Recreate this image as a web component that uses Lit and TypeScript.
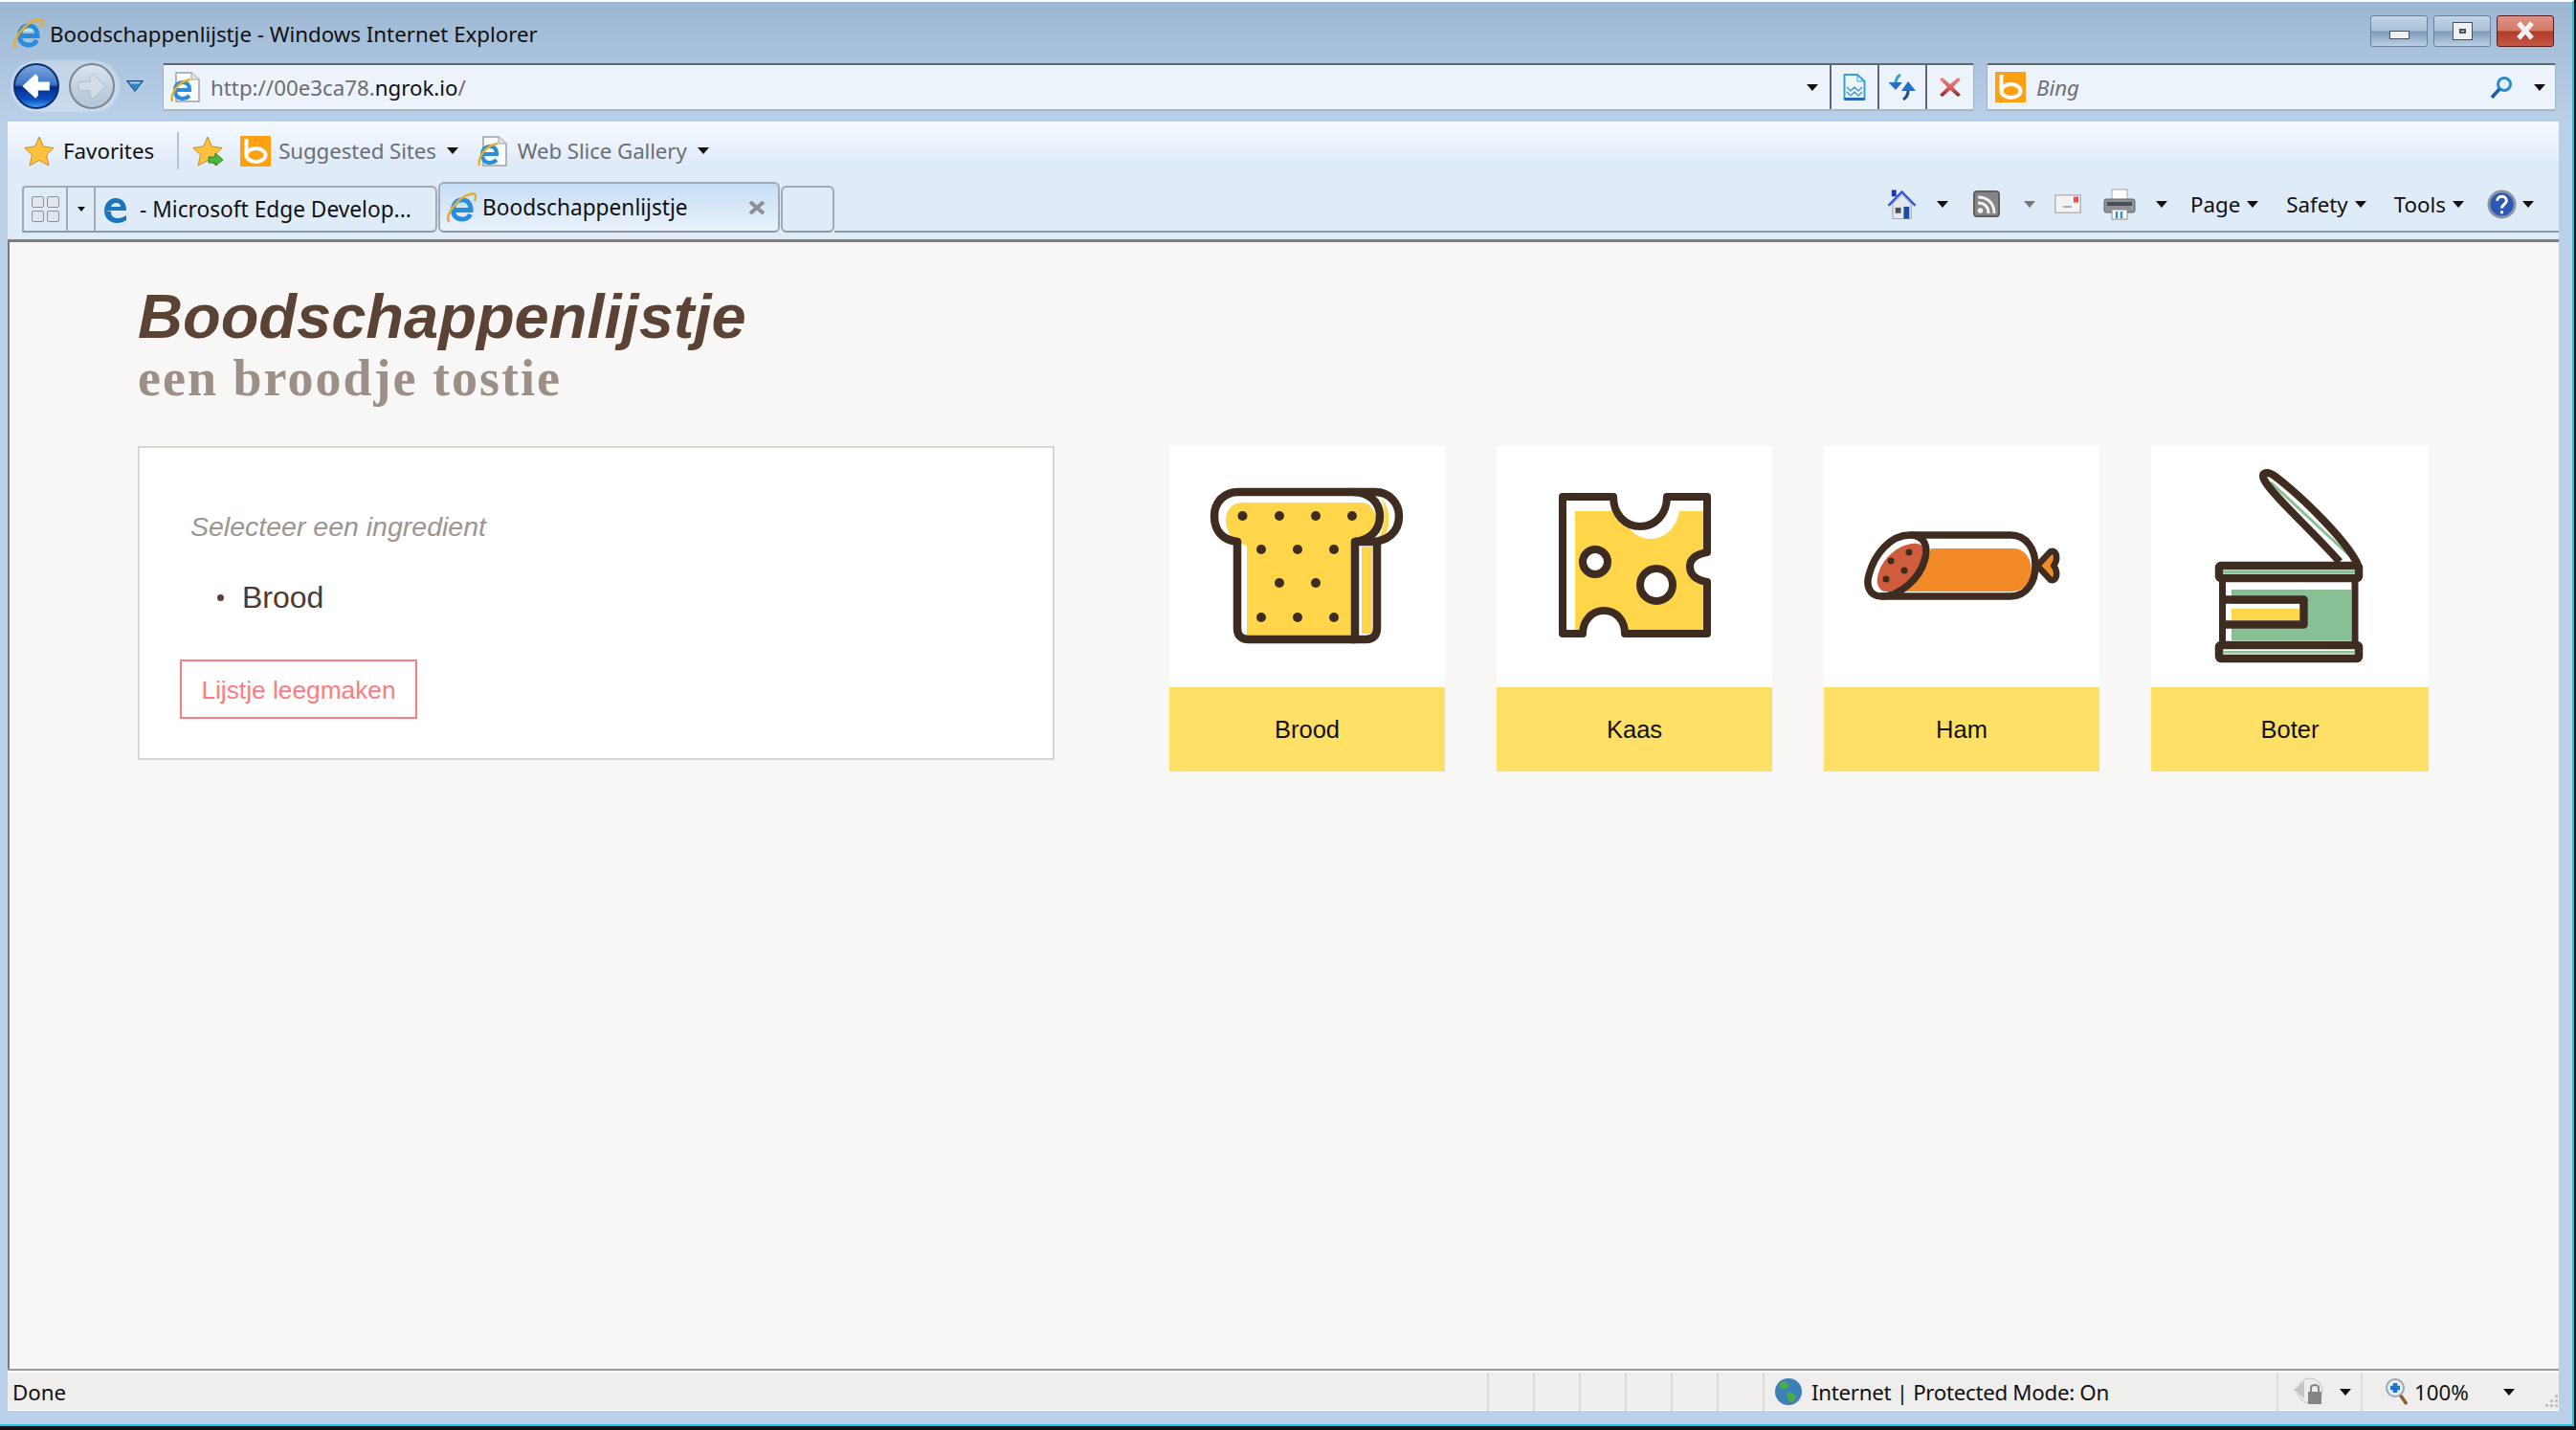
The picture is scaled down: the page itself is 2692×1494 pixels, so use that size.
import { LitElement, css, html, svg, type TemplateResult } from "lit";
import { customElement } from "lit/decorators.js";

const INK = "#3f2c20";
const YELLOW = "#ffd54a";
const GREEN = "#88bf95";

const ieGlyph = svg`
  <path d="M8 18.500 H26 C26 11 22 8 17 8 C11 8 7.500 12 7.500 18.500 C7.500 25 12 28 17 28 C21 28 24 26 25.500 23" fill="none" stroke="#2a8ddb" stroke-width="5" />
  <path d="M11 14 C12 11 14 10.500 17 10.500 C20 10.500 22 11.500 22.500 14 Z" fill="#bfe4fa" />
  <path d="M3 31 C-1 23 13 4 27 1.500 C32 0.500 32 5 30 9" fill="none" stroke="#e8ad2e" stroke-width="2.600" />
`;

const ieIcon = (): TemplateResult => html`<svg class="ie" viewBox="0 0 32 32">${ieGlyph}</svg>`;

const docIcon = (): TemplateResult => html`<svg class="ie" viewBox="0 0 32 32">
  <path d="M6 1 H22 L30 8 V31 H6 Z" fill="#fbfbfc" stroke="#9da1a6" stroke-width="1.500" />
  <path d="M22 1 V8 H30" fill="#e3e5e8" stroke="#9da1a6" />
  <path d="M5 19 H20 C20 13 17 11 13 11 C8 11 5 14 5 19 C5 25 8 28 13 28 C16 28 18 27 20 25" fill="none" stroke="#2a8ddb" stroke-width="4" />
  <path d="M2 31 C0 23 8 10 21 8" fill="none" stroke="#e8ad2e" stroke-width="2.400" />
</svg>`;

const bingIcon = (): TemplateResult => html`<svg class="bing" viewBox="0 0 32 32">
  <rect width="32" height="32" fill="#ffa012" />
  <path d="M6.500 3 V20" stroke="#fff" stroke-width="4" />
  <ellipse cx="16.500" cy="20" rx="10" ry="7" fill="none" stroke="#fff" stroke-width="4" />
</svg>`;

const starIcon = (extra = false): TemplateResult => html`<svg class="star" viewBox="0 0 32 32">
  <path d="M16 1 L20.500 11 L31 12.500 L23.500 20 L26 31 L16 25.500 L6 31 L8.500 20 L1 12.500 L11.500 11 Z" fill="#fbc13f" stroke="#c98a22" />
  ${extra ? svg`<path d="M17 22 H24 V18 L32 25 L24 31 V28 H17 Z" fill="#49b83c" stroke="#2c8a24" />` : ""}
</svg>`;

const breadIcon = svg`
  <path d="M81 104 C66 100 59 90 59 78 C59 66 66 59 78 59 H200 C212 59 216 70 216 78 C216 90 205 98 190 98 V198 H81 Z" fill="${YELLOW}" />
  <path d="M222 55 C231 65 233 86 222 97 L218 97 C226 85 226 68 222 55 Z" fill="${YELLOW}" />
  <rect x="201" y="105" width="11" height="91" fill="${YELLOW}" />
  <path d="M71 100 C55 98 47 88 47 73 C47 58 58 48 72 48 H192 C208 48 220 58 220 73 C220 88 210 98 194 100 V202 H83 Q71 202 71 190 Z" fill="none" stroke="${INK}" stroke-width="8.500" stroke-linejoin="round" />
  <path d="M192 48 H215 C230 48 240 60 240 73 C240 90 228 100 210 100 H194 M217 100 V190 Q217 202 205 202 H190" fill="none" stroke="${INK}" stroke-width="8.500" />
  ${[[76.500, 73], [115, 73], [153, 73], [191, 73], [96, 108], [134, 108], [172, 108], [115, 143], [153, 143], [96, 179], [134, 179], [172, 179]].map(
    ([x, y]) => svg`<circle cx="${x}" cy="${y}" r="5" fill="${INK}" />`,
  )}
`;

const cheeseIcon = svg`
  <path d="M82 68 H131 C135 88 148 97 161 97 C176 97 188 85 191 68 H217 V111 C208 113 202 118 202 126 C202 134 208 140 217 142 V192 H134 C134 182 125 172 112 172 C100 172 90 182 87 192 H82 Z" fill="${YELLOW}" />
  <path d="M69 53 H122 C122 72 135 84 150 84 C165 84 178 72 178 53 H220 V111 C208 113 202 118 202 126 C202 134 208 140 220 142 V196 H134 C134 182 125 172 112 172 C100 172 90 182 90 196 H69 Z" fill="none" stroke="${INK}" stroke-width="8" stroke-linejoin="round" />
  <circle cx="103" cy="121" r="13" fill="#fff" stroke="${INK}" stroke-width="8" />
  <circle cx="167" cy="145" r="17" fill="#fff" stroke="${INK}" stroke-width="8" />
`;

const hamIcon = svg`
  <path d="M112 107 H198 C210 107 217 118 217 130 C217 142 210 152 195 152 H82 C95 145 105 130 112 107 Z" fill="#f28a27" />
  <path d="M92 102 C105 100 108 110 103 122 C96 140 78 153 64 152 C55 150 54 140 58 130 C64 115 78 104 92 102 Z" fill="#d05c3e" />
  <path d="M90 93 H195 C212 93 221 108 221 125 C221 142 212 157 195 157 H60 C47 157 44 145 47 135 C53 112 70 93 90 93 Z" fill="none" stroke="${INK}" stroke-width="7.500" />
  <path d="M90 93 C105 93 110 105 105 120 C100 138 80 157 60 157" fill="none" stroke="${INK}" stroke-width="7.500" />
  ${[[89, 111], [70, 120], [84, 130], [65, 139]].map(([x, y]) => svg`<circle cx="${x}" cy="${y}" r="3.500" fill="${INK}" />`)}
  <path d="M223 125 L237 110 C244 108 245 119 240 125 C245 131 244 142 237 140 Z" fill="#f28a27" stroke="${INK}" stroke-width="6.500" stroke-linejoin="round" />
`;

const canIcon = svg`
  <rect x="84" y="150" width="125" height="53" fill="${GREEN}" />
  <rect x="76" y="165" width="80" height="18" fill="#fff" />
  <rect x="84" y="170" width="71" height="12" fill="${YELLOW}" />
  <path d="M125 38 L208 115" stroke="${GREEN}" stroke-width="3" />
  <path d="M197 121 C170 90 125 50 118 35 C114 27 122 26 130 32 C160 55 205 100 216 124" fill="none" stroke="${INK}" stroke-width="8" />
  <rect x="71" y="125" width="146" height="13" rx="2" fill="#fff" stroke="${INK}" stroke-width="8.500" />
  <rect x="75" y="130" width="138" height="3" fill="${GREEN}" />
  <path d="M74.500 138 V208 M213 138 V208" stroke="${INK}" stroke-width="7" />
  <path d="M75 160.500 H159.500 V186.500 H75" fill="none" stroke="${INK}" stroke-width="8.500" stroke-linejoin="round" />
  <rect x="71" y="208" width="146" height="14" rx="2" fill="#fff" stroke="${INK}" stroke-width="8.500" />
  <rect x="75" y="214" width="138" height="2.500" fill="${GREEN}" />
`;

const cards = [
  { name: "Brood", icon: breadIcon },
  { name: "Kaas", icon: cheeseIcon },
  { name: "Ham", icon: hamIcon },
  { name: "Boter", icon: canIcon },
];

@customElement("app-root")
export class AppRoot extends LitElement {
  render(): TemplateResult {
    return html`<div class="window">
      <div class="titlebar">
        ${ieIcon()}
        <span class="title">Boodschappenlijstje - Windows Internet Explorer</span>
        <div class="controls">
          <div class="ctl"><i class="min"></i></div>
          <div class="ctl"><i class="max"></i></div>
          <div class="ctl close">
            <svg viewBox="0 0 20 20" width="22" height="20"><path d="M3 2 L17 18 M17 2 L3 18" stroke="#f2f2f2" stroke-width="5" /></svg>
          </div>
        </div>
      </div>

      <div class="navrow">
        <div class="navbtns">
          <div class="round back">
            <svg viewBox="0 0 48 48" width="44" height="44"><path d="M8 24 L23 10 L26 13 V19 H39 V29 H26 V35 L23 38 Z" fill="#fff" /></svg>
          </div>
          <div class="round fwd">
            <svg viewBox="0 0 48 48" width="44" height="44"><path d="M40 24 L25 10 L22 13 V19 H9 V29 H22 V35 L25 38 Z" fill="#d3dde8" stroke="#aebccb" /></svg>
          </div>
          <svg class="nav-drop" viewBox="0 0 18 12" width="18" height="12">
            <path d="M0.500 0.500 H17.500 L9 11.500 Z" fill="#2f86c9" stroke="#1c4a78" />
            <path d="M3 1.500 H15 L13.500 3.500 H4.500 Z" fill="#9ccbec" />
          </svg>
        </div>
        <div class="address">
          ${docIcon()}
          <span class="url">http://00e3ca78.<b>ngrok.io</b>/</span>
          <i class="arrow url-arrow"></i>
          <div class="addr-btn">
            <svg viewBox="0 0 24 28" width="24" height="28">
              <path d="M1.500 1 H15 L22.500 8 V26.500 H1.500 Z" fill="#eef6fc" stroke="#36a3d8" stroke-width="2" />
              <path d="M1.500 26.500 H22.500" stroke="#2468b4" stroke-width="3" />
              <path d="M15 1 V8 H22.500" fill="none" stroke="#36a3d8" />
              <path d="M4 14 L8 18 L12 14 L16 18 L20 14 M4 19 L8 23 L12 19 L16 23 L20 19" fill="none" stroke="#4a9bd6" stroke-width="1.500" />
            </svg>
          </div>
          <div class="addr-btn">
            <svg viewBox="0 0 30 28" width="30" height="28">
              <path d="M13 1 C10 3 8 6 8 10" fill="none" stroke="#35a0d8" stroke-width="3" />
              <path d="M0.500 9 H15 L8 17 Z" fill="#2b6fc0" />
              <path d="M21 18 C21 22 19 25 16 27" fill="none" stroke="#1d4c8a" stroke-width="3" />
              <path d="M14 18 H29 L21 8 Z" fill="#2b6fc0" />
            </svg>
          </div>
          <div class="addr-btn">
            <svg viewBox="0 0 22 20" width="22" height="20">
              <defs>
                <linearGradient id="stop" x1="0" y1="0" x2="0" y2="1">
                  <stop offset="0" stop-color="#ec8585" />
                  <stop offset="0.55" stop-color="#d95f5f" />
                  <stop offset="1" stop-color="#8a1f24" />
                </linearGradient>
              </defs>
              <path d="M0 2 L3 0 L11 7 L19 0 L22 2 L14 10 L22 18 L19 20 L11 13 L3 20 L0 18 L8 10 Z" fill="url(#stop)" />
            </svg>
          </div>
        </div>
        <div class="search">
          ${bingIcon()}
          <span class="bing-text">Bing</span>
          <svg class="lens" viewBox="0 0 24 24" width="24" height="24">
            <circle cx="15" cy="9" r="6.500" fill="#e6f2fb" stroke="#2a8ad0" stroke-width="3" />
            <path d="M10 14 L2 23" stroke="#1d5ea8" stroke-width="3.500" />
          </svg>
          <i class="arrow search-arrow"></i>
        </div>
      </div>

      <div class="chrome">
        <div class="favbar">
          ${starIcon()}
          <span class="fav-label">Favorites</span>
          <i class="fav-sep"></i>
          ${starIcon(true)}
          ${bingIcon()}
          <span class="link">Suggested Sites</span>
          <i class="arrow"></i>
          ${docIcon()}
          <span class="link">Web Slice Gallery</span>
          <i class="arrow"></i>
        </div>

        <div class="tabrow">
          <div class="quick">
            <div class="grid-ico"><i></i><i></i><i></i><i></i></div>
          </div>
          <div class="quick drop"><i class="arrow mini"></i></div>
          <div class="tab">
            <svg class="edge" viewBox="0 0 32 32">
              <path d="M4 17 H26 C26 9 22 4 15 4 C8 4 3 10 3 17 C3 25 9 30 16 30 C20 30 23 29 26 27 V22 C23 24 20 25 17 25 C13 25 10 23 10 18 M10 13 C11 10 13 9 15 9 C18 9 20 10 20 13 Z" fill="#1c74bd" />
            </svg>
            <span>- Microsoft Edge Develop...</span>
          </div>
          <div class="tab active">
            ${ieIcon()}
            <span>Boodschappenlijstje</span>
            <svg class="tab-x" viewBox="0 0 18 14" width="18" height="14"><path d="M2 1 L16 13 M16 1 L2 13" stroke="#8c9095" stroke-width="4" /></svg>
          </div>
          <div class="tab newtab"></div>

          <div class="tools">
            <svg viewBox="0 0 32 33" width="31" height="33">
              <rect x="5" y="1" width="5" height="7" fill="#1f35ad" />
              <path d="M6 16 L16 6 L26 16 V32 H6 Z" fill="#e3e7ec" stroke="#9aa3af" />
              <path d="M1.500 18 L16 3 L30.500 18" fill="none" stroke="#3a55c8" stroke-width="2.500" />
              <rect x="18" y="19" width="6" height="13" fill="#1d4c9c" />
              <rect x="9" y="20" width="6" height="6" fill="#4a4f57" />
            </svg>
            <i class="arrow a-home"></i>
            <svg viewBox="0 0 28 28" width="28" height="28">
              <rect x="1" y="1" width="26" height="26" rx="3" fill="#858585" stroke="#606060" stroke-width="2" />
              <circle cx="7.500" cy="21" r="2.800" fill="#f2f2f2" />
              <path d="M5 13 C12 13 16 17 16 24 M5 7 C16 7 22 14 22 24" fill="none" stroke="#f2f2f2" stroke-width="3" />
            </svg>
            <i class="arrow gray a-rss"></i>
            <svg viewBox="0 0 28 20" width="28" height="20">
              <rect x="0.750" y="0.750" width="26.500" height="18.500" fill="#f3f3f3" stroke="#b5b5b5" stroke-width="1.500" />
              <rect x="20" y="2.500" width="5" height="6" fill="#ee4a4a" />
              <path d="M9 13 H18" stroke="#9a9a9a" stroke-width="1.500" />
            </svg>
            <svg class="t-print" viewBox="0 0 34 33" width="34" height="33">
              <rect x="9" y="1" width="16" height="12" fill="#fff" stroke="#a5a5a5" />
              <rect x="1" y="11" width="32" height="14" rx="2" fill="#8c9097" stroke="#62666c" />
              <rect x="4" y="14" width="26" height="4" fill="#4a4e54" />
              <rect x="29" y="19" width="2" height="2" fill="#63d05a" />
              <rect x="9" y="22" width="16" height="10" fill="#fff" stroke="#8a8a8a" />
              <path d="M14 24 V31 M19 24 V31" stroke="#2f8fc9" stroke-width="2.500" />
            </svg>
            <i class="arrow a-print"></i>
            <span class="menu">Page</span><i class="arrow a-menu"></i>
            <span class="menu">Safety</span><i class="arrow a-menu"></i>
            <span class="menu">Tools</span><i class="arrow a-menu"></i>
            <svg class="t-help" viewBox="0 0 32 32" width="31" height="31">
              <circle cx="16" cy="16" r="14" fill="#2d57b4" stroke="#8b93a6" stroke-width="3" />
              <path d="M11 12 C11 6 21 6 21 12 C21 16 16 16 16 20 M16 23 V26" fill="none" stroke="#fff" stroke-width="3" />
            </svg>
            <i class="arrow a-help"></i>
          </div>
        </div>

        <main class="page">
          <h1>Boodschappenlijstje</h1>
          <h2>een broodje tostie</h2>
          <div class="columns">
            <section class="panel">
              <p class="hint">Selecteer een ingredient</p>
              <ul><li>Brood</li></ul>
              <button>Lijstje leegmaken</button>
            </section>
            <div class="cards">
              ${cards.map(
                (c) => html`<div class="card">
                  <svg class="art" viewBox="0 0 288 252" width="288" height="252">${c.icon}</svg>
                  <div class="label">${c.name}</div>
                </div>`,
              )}
            </div>
          </div>
        </main>

        <footer class="status">
          <span class="done">Done</span>
          <div class="cells"><i></i><i></i><i></i><i></i><i></i><i></i><i></i></div>
          <svg class="globe" viewBox="0 0 30 30" width="30" height="30">
            <circle cx="15" cy="15" r="14" fill="#3d7fb8" />
            <path d="M7 5 C12 3 16 6 15 10 C12 13 8 12 5 11 Z M13 16 C18 14 24 17 22 23 C19 28 15 26 14 22 Z" fill="#4bab4a" />
          </svg>
          <span class="zone">Internet | Protected Mode: On</span>
          <div class="cell-end">
            <svg viewBox="0 0 34 30" width="34" height="30">
              <circle cx="18" cy="14" r="13" fill="#ececec" stroke="#c4c4c4" />
              <path d="M1 13 L12 4 V22 Z" fill="#c6c6c6" />
              <rect x="16" y="15" width="14" height="13" fill="#858585" />
              <path d="M19 15 V11 C19 7 27 7 27 11 V15" fill="none" stroke="#858585" stroke-width="2" />
            </svg>
            <i class="arrow a-lock"></i>
          </div>
          <div class="zoom">
            <svg viewBox="0 0 24 28" width="24" height="28">
              <path d="M15 17 L22 27" stroke="#8a5a30" stroke-width="3.500" />
              <circle cx="10" cy="10" r="9" fill="#e8eef5" stroke="#9aa6b3" stroke-width="2" />
              <path d="M5 10 H15 M10 5 V15" stroke="#1d75c9" stroke-width="4.500" />
            </svg>
            <span>100%</span>
            <i class="arrow a-zoom"></i>
          </div>
          <svg class="grip" viewBox="0 0 16 16" width="16" height="16">
            ${[[13, 2], [8, 7], [13, 7], [3, 12], [8, 12], [13, 12]].map(
              ([x, y]) => svg`<rect x="${x}" y="${y}" width="3" height="3" fill="#c3c1bf" />`,
            )}
          </svg>
        </footer>
      </div>
    </div>`;
  }

  static styles = css`
    :host {
      display: block;
      width: 2692px;
      height: 1494px;
      overflow: hidden;
      background: #101418;
    }

    * {
      box-sizing: border-box;
    }

    svg {
      flex: none;
    }

    .window {
      width: 2690px;
      height: 1490px;
      display: flex;
      flex-direction: column;
      border-top: 2px solid #fff;
      border-bottom: 2px solid #1fbfe0;
      border-right: 2px solid #1fbfe0;
      background: linear-gradient(#9db7d3 0, #b9d0e8 125px);
      font-family: "Noto Sans", sans-serif;
      font-size: 22.300px;
      color: #111;
      white-space: nowrap;
    }

    .arrow {
      display: block;
      flex: none;
      width: 0;
      height: 0;
      border-left: 6.500px solid transparent;
      border-right: 6.500px solid transparent;
      border-top: 7px solid #111;
    }

    .arrow.gray {
      border-top-color: #777;
    }

    .arrow.mini {
      border-left-width: 4px;
      border-right-width: 4px;
      border-top-width: 5px;
    }

    .ie,
    .bing,
    .star {
      width: 32px;
      height: 32px;
    }

    /* title bar */
    .titlebar {
      flex: none;
      height: 60px;
      display: flex;
      align-items: center;
      padding: 6px 0 0 13px;
    }

    .title {
      margin-left: 7px;
    }

    .controls {
      margin-left: auto;
      margin-right: 19px;
      display: flex;
      gap: 6px;
      margin-top: -6px;
    }

    .ctl {
      width: 60px;
      height: 33px;
      border: 1px solid #6f8299;
      border-radius: 3px;
      display: flex;
      align-items: center;
      justify-content: center;
      background: linear-gradient(#c2d4e8 0, #a9c0da 48%, #7f9ab9 52%, #bcd0e6 100%);
    }

    .ctl.close {
      border-color: #5a1a1e;
      background: linear-gradient(#dd9184 0, #d3796a 48%, #b03a28 52%, #c65a44 100%);
    }

    .min {
      width: 21px;
      height: 9px;
      margin-top: 8px;
      background: #f0f0f0;
      border: 1px solid #47525e;
    }

    .max {
      width: 21px;
      height: 19px;
      display: block;
      background: #f0f0f0;
      border: 1px solid #47525e;
      box-shadow: inset 0 0 0 6px #f0f0f0, inset 0 0 0 8px #47525e;
    }

    /* back, forward, address, search */
    .navrow {
      flex: none;
      height: 65px;
      display: flex;
      align-items: flex-start;
      padding: 4px 0 0 12px;
    }

    .navbtns {
      position: relative;
      width: 158px;
      height: 56px;
      margin-top: -4px;
      display: flex;
      align-items: center;
      gap: 10px;
      padding-left: 2px;
    }

    .navbtns::before {
      content: "";
      position: absolute;
      left: 0;
      top: 2px;
      width: 112px;
      height: 52px;
      border-radius: 26px;
      background: rgba(255, 255, 255, 0.28);
      box-shadow: 0 0 3px rgba(255, 255, 255, 0.6);
    }

    .round {
      position: relative;
      width: 48px;
      height: 48px;
      border-radius: 50%;
    }

    .back {
      background: linear-gradient(#7ba6de 0, #3f74c6 46%, #062a88 52%, #0c50c0 82%, #3e9ef2 100%);
      border: 2px solid #0c2f72;
    }

    .fwd {
      background: linear-gradient(#dbe5f0 0, #c3d1e0 50%, #b4c5d7 100%);
      border: 2px solid #7c8592;
    }

    .nav-drop {
      position: relative;
      margin-left: 2px;
    }

    .address,
    .search {
      height: 50px;
      display: flex;
      align-items: center;
      background: #ecf3fb;
      border: 1px solid #9eb1c6;
      border-top: 2px solid #5b6570;
      border-bottom: 2px solid #a9b6c4;
      border-radius: 2px;
    }

    .address {
      width: 1893px;
      padding-left: 7px;
    }

    .url {
      margin-left: 10px;
      color: #6d6d6d;
    }

    .url b {
      font-weight: 400;
      color: #111;
    }

    .url-arrow {
      margin-left: auto;
      margin-right: 12px;
    }

    .addr-btn {
      flex: none;
      width: 50px;
      height: 100%;
      display: flex;
      align-items: center;
      justify-content: center;
      border-left: 2px solid #5d6873;
    }

    .search {
      width: 595px;
      margin-left: 13px;
      padding-left: 8px;
    }

    .bing-text {
      margin-left: 11px;
      color: #6f6f75;
      font-style: italic;
    }

    .lens {
      margin-left: auto;
    }

    .search-arrow {
      margin: 0 10px 0 22px;
    }

    /* everything inside the frame */
    .chrome {
      flex: 1;
      min-height: 0;
      margin: 0 14px 14px 8px;
      display: flex;
      flex-direction: column;
    }

    .favbar {
      flex: none;
      height: 64px;
      display: flex;
      align-items: center;
      padding: 0 0 3px 17px;
      background: linear-gradient(#f6faff 0, #e0ebf8 44px);
    }

    .fav-label {
      margin-left: 9px;
    }

    .fav-sep {
      width: 2px;
      height: 39px;
      margin: 0 14px 0 24px;
      background: #b9c3ce;
    }

    .favbar .bing {
      margin: 0 8px 0 18px;
    }

    .link {
      color: #6c6f73;
      letter-spacing: -0.1px;
    }

    .favbar .arrow {
      margin: 0 20px 0 11px;
    }

    .favbar .ie {
      margin-right: 10px;
    }

    .tabrow {
      flex: none;
      height: 62px;
      display: flex;
      align-items: flex-end;
      padding: 0 0 7px 15px;
      background: #e0ebf8;
      border-bottom: 3px solid #7e7e7e;
    }

    .quick {
      height: 49px;
      width: 46px;
      display: flex;
      align-items: center;
      justify-content: center;
      border: 2px solid #a3a9b1;
      border-right: 0;
      border-bottom: 2px solid #8f97a3;
      border-radius: 4px 0 0 0;
    }

    .quick.drop {
      width: 31px;
      border-radius: 0;
      border-right: 2px solid #a3a9b1;
    }

    .grid-ico {
      display: grid;
      grid-template-columns: 13px 13px;
      gap: 3px;
    }

    .grid-ico i {
      height: 12px;
      background: #e2e6ec;
      border: 1px solid #8a919a;
      border-radius: 2px;
    }

    .tab {
      flex: none;
      height: 49px;
      width: 357px;
      display: flex;
      align-items: center;
      padding-left: 6px;
      gap: 8px;
      font-size: 22.700px;
      border: 2px solid #a3a9b1;
      border-left: 0;
      border-bottom-color: #8f97a3;
      border-radius: 0 6px 6px 0;
    }

    .tab.active {
      height: 53px;
      margin-left: 1px;
      gap: 6px;
      border-left: 2px solid #a3a9b1;
      border-radius: 6px;
      background: linear-gradient(#c6ddf6 0, #eaf2fb 100%);
    }

    .tab-x {
      margin-left: auto;
      margin-right: 13px;
    }

    .newtab {
      width: 56px;
      margin-left: 1px;
      border-left: 2px solid #a3a9b1;
      border-radius: 6px;
    }

    .edge {
      width: 32px;
      height: 32px;
    }

    .tools {
      flex: 1;
      align-self: stretch;
      display: flex;
      align-items: center;
      justify-content: flex-end;
      padding: 0 26px 6px 0;
      border-bottom: 2px solid #8f97a3;
    }

    .a-home {
      margin: 0 26px 0 21px;
    }

    .a-rss {
      margin: 0 20px 0 25px;
    }

    .t-print {
      margin-left: 23px;
    }

    .a-print {
      margin: 0 24px 0 21px;
    }

    .a-menu {
      margin: 0 29px 0 7px;
    }

    .t-help {
      margin-left: -5px;
    }

    .a-help {
      margin-left: 6px;
    }

    /* the page itself */
    .page {
      flex: 1;
      min-height: 0;
      padding: 43px 0 0 134px;
      background: #f8f7f5;
      border-left: 2px solid #77797c;
      font-family: "Liberation Sans", Arial, sans-serif;
    }

    h1 {
      margin: 0;
      font-size: 65px;
      line-height: 70px;
      font-style: italic;
      font-weight: 700;
      color: #5a4334;
    }

    h2 {
      margin: 1px 0 43px;
      font-family: "Liberation Serif", serif;
      font-size: 54px;
      line-height: 56px;
      font-weight: 700;
      letter-spacing: 2px;
      color: #9c8f87;
    }

    .columns {
      display: flex;
      align-items: flex-start;
      gap: 120px;
    }

    .panel {
      width: 958px;
      height: 328px;
      padding: 65px 0 0 42px;
      background: #fff;
      border: 2px solid #d5d4cf;
    }

    .hint {
      margin: 0 0 0 11px;
      font-size: 28.500px;
      line-height: 34px;
      font-style: italic;
      color: #9e9591;
    }

    ul {
      list-style: none;
      margin: 37px 0 45px;
      padding: 0 0 0 39px;
    }

    li {
      display: flex;
      align-items: center;
      gap: 19px;
      font-size: 32px;
      line-height: 40px;
      color: #4a3c33;
    }

    li::before {
      content: "";
      width: 7px;
      height: 7px;
      border-radius: 50%;
      background: #5a4334;
    }

    button {
      display: block;
      width: 248px;
      height: 62px;
      padding: 2px 0 0;
      background: #fff;
      border: 2px solid #ff7b80;
      font: 26.300px "Liberation Sans", Arial, sans-serif;
      color: #ff7b80;
    }

    .cards {
      display: grid;
      grid-template-columns: repeat(3, 288px) 290px;
      gap: 54px;
    }

    .card {
      background: #fff;
    }

    .art {
      display: block;
    }

    .label {
      height: 88px;
      display: flex;
      align-items: center;
      justify-content: center;
      background: #ffe066;
      font-size: 25.500px;
      color: #111;
    }

    /* status bar */
    .status {
      flex: none;
      height: 44px;
      display: flex;
      align-items: center;
      padding: 2px 0 0 5px;
      background: #f0eeed;
      border-top: 2px solid #999;
      box-shadow: inset 0 2px 0 #fff, inset 0 -1px 0 #fff;
    }

    .done {
      width: 50px;
    }

    .cells {
      display: flex;
      margin-left: 1491px;
    }

    .cells i {
      display: block;
      width: 48px;
      height: 40px;
      border-left: 2px solid #dedcdb;
    }

    .globe {
      margin-left: -36px;
    }

    .zone {
      margin-left: 9px;
      letter-spacing: -0.3px;
    }

    .cell-end {
      flex: none;
      display: flex;
      align-items: center;
      height: 100%;
      width: 90px;
      margin-left: 175px;
      padding-left: 15px;
      border-left: 2px solid #dedcdb;
      border-right: 2px solid #dedcdb;
    }

    .a-lock {
      margin-left: 15px;
    }

    .zoom {
      flex: none;
      display: flex;
      align-items: center;
      margin-left: 24px;
      gap: 6px;
    }

    .a-zoom {
      margin-left: 30px;
    }

    .grip {
      align-self: flex-end;
      margin: 0 0 3px 29px;
    }
  `;
}

declare global {
  interface HTMLElementTagNameMap {
    "app-root": AppRoot;
  }
}
